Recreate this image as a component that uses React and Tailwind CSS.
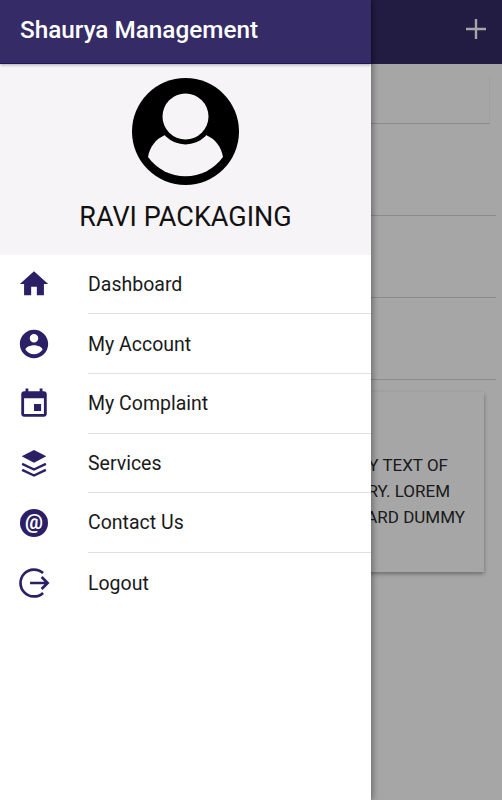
import React from "react";

const menuItems = [
  { label: "Dashboard", icon: "home" },
  { label: "My Account", icon: "account" },
  { label: "My Complaint", icon: "event" },
  { label: "Services", icon: "layers" },
  { label: "Contact Us", icon: "at" },
  { label: "Logout", icon: "logout" },
];

const MenuIcon = ({ name }) => {
  if (name === "at") {
    return (
      <div className="w-[27.5px] h-[27.5px] rounded-full bg-[#2b1f66] flex items-center justify-center text-white text-[20px] font-bold leading-none pb-[2px]">
        @
      </div>
    );
  }
  return (
    <svg viewBox="0 0 24 24" className="w-[34px] h-[34px] text-[#2b1f66]" fill="currentColor">
      {name === "home" && <path d="M10 20v-6h4v6h5v-8h3L12 3 2 12h3v8z" />}
      {name === "account" && (
        <path d="M12 2C6.48 2 2 6.48 2 12s4.48 10 10 10 10-4.48 10-10S17.52 2 12 2zm0 3c1.66 0 3 1.34 3 3s-1.34 3-3 3-3-1.34-3-3 1.34-3 3-3zm0 14.2c-2.5 0-4.71-1.28-6-3.22.03-1.99 4-3.08 6-3.08 1.99 0 5.97 1.09 6 3.08-1.29 1.94-3.5 3.22-6 3.22z" />
      )}
      {name === "event" && (
        <path d="M17 12h-5v5h5v-5zM16 1v2H8V1H6v2H5c-1.11 0-1.99.9-1.99 2L3 19c0 1.1.89 2 2 2h14c1.1 0 2-.9 2-2V5c0-1.1-.9-2-2-2h-1V1h-2zm3 18H5V8h14v11z" />
      )}
      {name === "layers" && (
        <>
          <path d="M12 2.8l8.7 4.5-8.7 4.5-8.7-4.5z" />
          <path d="M3.6 12.6l8.4 4 8.4-4M3.6 16.8l8.4 4 8.4-4" fill="none" stroke="currentColor" strokeWidth="1.7" />
        </>
      )}
      {name === "logout" && (
        <g fill="none" stroke="currentColor" strokeWidth="1.9">
          <path d="M18.4 5A9.5 9.5 0 1 0 18.4 19" />
          <path d="M9.2 12h12.2M17.4 7.8l4.2 4.2-4.2 4.2" />
        </g>
      )}
    </svg>
  );
};

const Avatar = () => (
  <svg viewBox="0 0 107 107" className="w-[107px] h-[107px]">
    <circle cx="53.5" cy="53.5" r="53.5" fill="#000" />
    <path d="M16 79 C18 68 24 61 33 57 L74 57 C83 61 89 68 91 79 A46 46 0 0 1 16 79z" fill="#f6f4f6" />
    <circle cx="53.5" cy="38.5" r="28" fill="#000" />
    <circle cx="53.5" cy="38.5" r="23" fill="#f6f4f6" />
  </svg>
);

const App = () => {
  return (
    <div className="relative h-[800px] w-full overflow-hidden bg-white font-['Roboto',sans-serif]">
      {/* Page behind the drawer */}
      <div className="h-16 bg-[#352b66] flex items-center justify-end pr-[16px]">
        <svg viewBox="0 0 20 20" className="w-5 h-5 mb-[7px]" fill="none" stroke="#ffffff" strokeWidth="2.4">
          <path d="M10 0v20M0 10h20" />
        </svg>
      </div>
      <div className="h-[46.5px] mt-[13px] mr-3 border-b border-r border-b-[#d8d8d8] border-r-[#f4f4f4]" />
      <div className="h-[92px] mr-[6px] border-b border-[#d8d8d8]" />
      <div className="h-[82px] mr-[6px] border-b border-[#d8d8d8]" />
      <div className="h-[82px] mr-[6px] border-b border-[#d8d8d8]" />
      <div className="ml-[200px] mr-[18px] mt-[12.5px] h-[180px] pt-[60px] bg-white shadow-[0_2px_4px_rgba(0,0,0,0.35)] text-[17px] leading-[26px] text-[#2a2a2a] text-right whitespace-nowrap">
        <div className="pr-[36px]">SIMPLY DUMMY TEXT OF</div>
        <div className="pr-[34px]">THE INDUSTRY. LOREM</div>
        <div className="pr-[19px]">STANDARD DUMMY</div>
      </div>

      {/* Scrim */}
      <div className="absolute inset-0 bg-black/35" />

      {/* Drawer */}
      <div className="absolute top-0 bottom-0 left-0 w-[371px] bg-white shadow-[2px_0_6px_rgba(0,0,0,0.35)] flex flex-col">
        <div className="relative h-16 shrink-0 bg-[#352b66] border-b border-[#1f1458] flex items-center pl-5 pb-[2px] text-white text-[24.3px] font-medium shadow-[0_1px_3px_rgba(0,0,0,0.3)]">
          Shaurya Management
        </div>
        <div className="h-[190.67px] shrink-0 bg-[#f6f4f6] flex flex-col items-center pt-[14px]">
          <Avatar />
          <div className="mt-[17px] text-[27px] leading-[30px] text-[#111]">RAVI PACKAGING</div>
        </div>
        {menuItems.map((item, i) => (
          <div key={item.label} className="h-[59.67px] shrink-0 flex">
            <div className="w-[88px] flex items-center justify-center pr-[20px]">
              <MenuIcon name={item.icon} />
            </div>
            <div className={`flex-1 flex items-center pt-[1px] text-[19.5px] text-[#1a1a1a] ${i < menuItems.length - 1 ? "border-b border-[#e0e0e0]" : ""}`}>
              {item.label}
            </div>
          </div>
        ))}
      </div>
    </div>
  );
};

export default App;
